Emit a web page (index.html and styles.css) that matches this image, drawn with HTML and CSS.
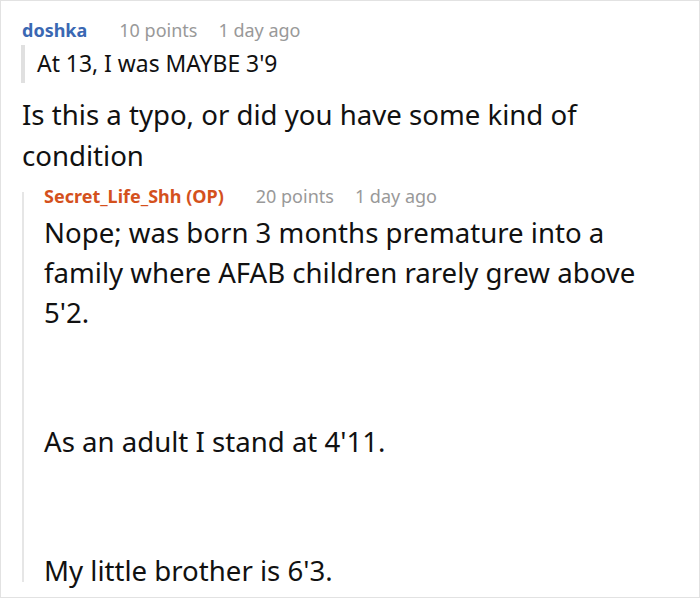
FILE: index.html
```html
<!DOCTYPE html>
<html>
<head>
<meta charset="utf-8">
<link rel="stylesheet" href="styles.css">
</head>
<body>
<div class="frame">
  <div class="comment">
    <div class="meta">
      <span class="user user-blue">doshka</span>
      <span class="info">10 points</span>
      <span class="info">1 day ago</span>
    </div>
    <blockquote class="quote">At 13, I was MAYBE 3'9</blockquote>
    <p class="body main">Is this a typo, or did you have some kind of condition</p>
    <div class="reply">
      <div class="meta reply-meta">
        <span class="user user-orange">Secret_Life_Shh (OP)</span>
        <span class="info">20 points</span>
        <span class="info">1 day ago</span>
      </div>
      <p class="body first">Nope; was born 3 months premature into a family where AFAB children rarely grew above 5'2.</p>
      <p class="body spaced">As an adult I stand at 4'11.</p>
      <p class="body spaced last">My little brother is 6'3.</p>
    </div>
  </div>
</div>
</body>
</html>
```
FILE: styles.css
```css
html, body {
  margin: 0;
  padding: 0;
  background: #fff;
}
.frame {
  width: 700px;
  height: 598px;
  box-sizing: border-box;
  border: 1px solid #e2e2e2;
  overflow: hidden;
  font-family: "Noto Sans", "Open Sans", sans-serif;
  color: #111;
}
.comment {
  padding: 17px 30px 0 20px;
}
.meta {
  display: flex;
  align-items: baseline;
  gap: 21px;
  font-size: 18px;
  line-height: 24px;
  margin-left: 1px;
}
.user {
  font-weight: bold;
  font-size: 18px;
  margin-right: 11px;
}
.user-blue { color: #3a68b3; }
.user-orange { color: #d4511d; }
.info { color: #999; }
.quote {
  margin: 3px 0 0 0;
  padding: 5px 0 5px 12px;
  border-left: 4px solid #e0e0e0;
  font-size: 22.9px;
  line-height: 28px;
}
.body {
  margin: 0;
  font-size: 27.6px;
  line-height: 40px;
}
.main {
  margin: 11px 0 0 1px;
  line-height: 41px;
}
.reply {
  display: flow-root;
  margin: 16px 0 0 1px;
  border-left: 2px solid #e6e6e6;
  padding-left: 20px;
}
.reply-meta {
  margin-top: -8px;
  margin-left: 0;
}
.first {
  margin-top: 4px;
}
.spaced {
  margin-top: 89px;
}
.last {
  margin-bottom: -8px;
}
```
